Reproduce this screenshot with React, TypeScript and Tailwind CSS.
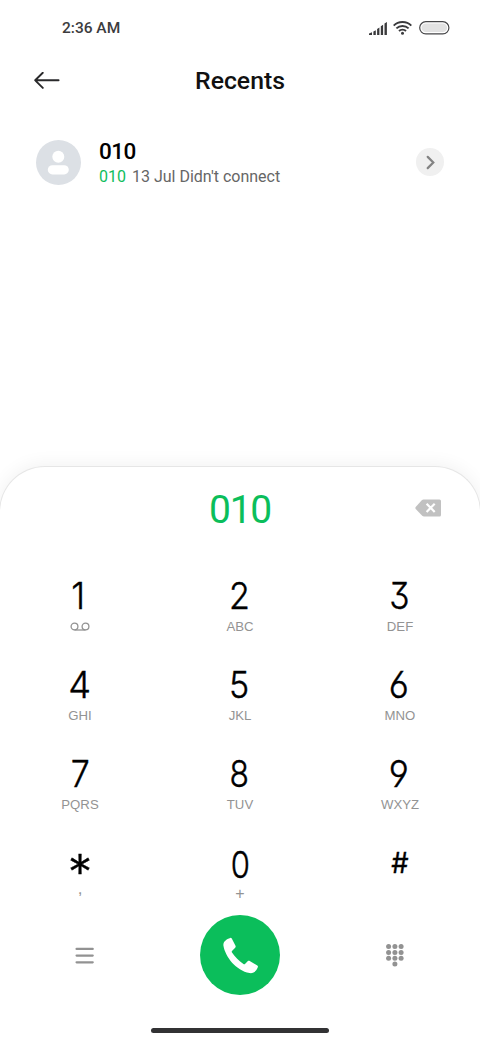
import React from "react";

type Key = {
    digit: string;
    label?: React.ReactNode;
    digitClass?: string;
    labelClass?: string;
};

const Voicemail = () => (
    <svg className="shrink-0" width="20" height="10" viewBox="0 0 20 10" fill="none" stroke="#939393" strokeWidth="1.3">
        <circle cx="4.5" cy="4.5" r="3.4" />
        <circle cx="15.5" cy="4.5" r="3.4" />
        <path d="M4.5 8H15.5" />
    </svg>
);

const digitBase = "scale-x-[0.92] text-[37px] font-light";

const keys: Key[] = [
    { digit: "1", label: <Voicemail />, digitClass: "scale-x-[0.95] text-[37px] font-light -translate-x-[2px]" },
    { digit: "2", label: "ABC", digitClass: "scale-x-[0.92] text-[37px] font-light -translate-x-px" },
    { digit: "3", label: "DEF", digitClass: "scale-x-[0.90] text-[37px] font-light -translate-x-px" },
    { digit: "4", label: "GHI", digitClass: "scale-x-[0.98] text-[37px] font-light" },
    { digit: "5", label: "JKL", digitClass: "scale-x-[0.92] text-[37px] font-light -translate-x-px" },
    { digit: "6", label: "MNO", digitClass: "scale-x-[0.94] text-[37px] font-light -translate-x-px" },
    { digit: "7", label: "PQRS" },
    { digit: "8", label: "TUV", digitClass: "scale-x-[0.86] text-[37px] font-light -translate-x-px" },
    { digit: "9", label: "WXYZ", digitClass: "scale-x-[0.94] text-[37px] font-light -translate-x-px" },
    { digit: "*", label: ",", digitClass: "text-[49px] font-light translate-y-[10px]", labelClass: "-translate-y-[5px] text-[17px]" },
    { digit: "0", label: "+", digitClass: "scale-x-[0.84] text-[37px] font-light translate-y-[2px]", labelClass: "text-[16px]" },
    { digit: "#", digitClass: "scale-x-[0.96] text-[28.5px] font-normal" },
];

function StatusBar() {
    return (
        <div className="flex h-14 items-center justify-between pl-[62px] pr-[30px]">
            <span className="mt-[2px] text-[15.5px] font-medium text-[#3c3c3e]">2:36 AM</span>
            <div className="flex items-center">
                <svg className="translate-x-px" width="18" height="13" viewBox="0 0 18 13" fill="#3a3a3c">
                    <path d="M0 13V11.6L3 10.2V13ZM4.4 9.4L6.8 8.2V13H4.4ZM8.1 7L10.4 5.6V13H8.1ZM11.8 4.2L14.1 2.8V13H11.8ZM15.5 1.5L17.9 0V13H15.5Z" />
                </svg>
                <svg className="ml-[7px]" width="19" height="14" viewBox="0 0 19 14" fill="none" stroke="#3a3a3c" strokeWidth="1.9">
                    <path d="M.7 4.6C5.5-.2 13.5-.2 18.3 4.6" />
                    <path d="M3.4 7.4C6.7 4.1 12.3 4.1 15.6 7.4" />
                    <path d="M6 10C7.9 8.1 11.1 8.1 13 10" />
                    <circle cx="9.5" cy="12.2" r="1.5" fill="#3a3a3c" stroke="none" />
                </svg>
                <svg className="ml-[7px]" width="31" height="14" viewBox="0 0 31 14">
                    <rect x=".7" y=".7" width="29.2" height="12.2" rx="6.1" fill="#fff" stroke="#464648" strokeWidth="1.2" />
                    <rect x="2.5" y="2.5" width="25.6" height="8.6" rx="4.3" fill="#e2e2e2" />
                </svg>
            </div>
        </div>
    );
}

function Header() {
    return (
        <header className="grid h-[50px] grid-cols-[80px_1fr_80px] items-center">
            <svg className="ml-[34px]" width="27" height="18" viewBox="0 0 27 18" fill="none" stroke="#29292b" strokeWidth="1.9" strokeLinecap="round" strokeLinejoin="round">
                <path d="M24.6 8.3H1.2M8.8.8L1.2 8.3L8.8 15.9" />
            </svg>
            <h1 className="text-center text-[24.8px] font-medium text-[#111]">Recents</h1>
        </header>
    );
}

function CallRow() {
    return (
        <div className="mt-[30px] flex h-[52px] items-center pl-9 pr-9">
            <svg width="45" height="45" viewBox="0 0 45 45" className="shrink-0">
                <circle cx="22.5" cy="22.5" r="22.5" fill="#dce0e5" />
                <circle cx="22.3" cy="16.8" r="6" fill="#fff" />
                <rect x="11.8" y="25.2" width="21" height="9.2" rx="4.6" fill="#fff" />
            </svg>
            <div className="ml-[18px] mt-[2px] flex-1">
                <div className="text-[22.5px] leading-[26px] font-medium tracking-[-0.5px] text-black">010</div>
                <div className="text-[16px] leading-[25px] text-[#666]">
                    <span className="mr-[6px] text-[#10bd5d]">010</span>
                    13 Jul Didn't connect
                </div>
            </div>
            <svg width="28" height="28" viewBox="0 0 28 28" fill="none">
                <circle cx="14" cy="14" r="14" fill="#f0f0f0" />
                <path d="M11.7 8.9L17.3 14.5L11.7 20.1" stroke="#838383" strokeWidth="2.2" strokeLinecap="round" />
            </svg>
        </div>
    );
}

function DialKey({ digit, label, digitClass = digitBase, labelClass = "text-[13.2px]" }: Key) {
    return (
        <button className="flex h-[89px] flex-col items-center">
            <span
                className={`h-[42px] font-[Inter] leading-[42px] text-black [-webkit-text-stroke:0.4px_black] [font-feature-settings:'cv03','cv04','cv09'] ${digitClass}`}
            >
                {digit}
            </span>
            <span
                className={`mt-px flex h-[18px] items-center font-['Liberation_Sans',Arial,sans-serif] leading-[18px] text-[#939393] ${labelClass}`}
            >
                {label}
            </span>
        </button>
    );
}

function BottomBar() {
    return (
        <div className="grid grid-cols-[170px_1fr_170px] items-center justify-items-center">
            <svg className="mr-px" width="19" height="17" viewBox="0 0 19 17" stroke="#929292" strokeWidth="2.3" strokeLinecap="round">
                <path d="M1.6 1.9H17.7M1.6 8.6H17.7M1.6 15.3H17.7" />
            </svg>
            <button className="flex size-20 items-center justify-center rounded-full bg-[#0bbe5b]">
                <svg width="37" height="37" viewBox="0 0 37 37" fill="#fff">
                    <path d="M8.3.9C9 .7 9.5 1 9.9 1.7L13.5 8.8C13.9 9.6 13.7 10.1 13.2 10.7L10 13.9C9.6 14.4 9.7 15 10 15.6C13 20.1 17 24 21.4 27C22.1 27.4 22.6 27.4 23 27L25.9 24C26.4 23.6 27 23.5 27.7 23.9L35.3 28.6C36 29.1 36.1 29.6 35.8 30.3C34.4 34.3 31.2 36.6 27.6 36.1C14 33.5 3.3 20 1.4 8.5C1 4.8 4.2 2.1 8.3.9Z" />
                </svg>
            </button>
            <svg width="18" height="23" viewBox="0 0 18 23" fill="#929292">
                {[2.6, 8.9, 15.1].map((cx) =>
                    [2.6, 8.4, 14.2].map((cy) => <circle key={`${cx}-${cy}`} cx={cx} cy={cy} r="2.5" />)
                )}
                <circle cx="8.9" cy="20" r="2.5" />
            </svg>
        </div>
    );
}

function Dialer() {
    return (
        <section className="-mx-px mt-[278px] flex h-[574px] flex-col rounded-t-[46px] border border-b-0 border-[#e6e6e6] bg-white shadow-[0_-2px_18px_rgba(0,0,0,0.055)]">
            <div className="mt-[21px] grid h-11 grid-cols-[80px_1fr_80px] items-center">
                <span className="col-start-2 text-center text-[39px] leading-[44px] tracking-[-1.2px] text-[#0bbe5b]">010</span>
                <svg className="ml-[15px] mb-[5px]" width="27" height="18" viewBox="0 0 27 18" fill="none">
                    <path d="M8.5.4H24.5Q26 .4 26 2V16Q26 17.6 24.5 17.6H9Q8 17.6 7.2 16.8L.7 10.1Q0 9 .7 7.9L7 1.1Q7.7.4 8.5.4Z" fill="#c1c1c1" />
                    <path d="M11.6 4.7L19.7 12.9M19.7 4.7L11.6 12.9" stroke="#fff" strokeWidth="2.2" />
                </svg>
            </div>
            <div className="mt-[43px] grid grid-cols-3">
                {keys.map((key) => (
                    <DialKey key={key.digit} {...key} />
                ))}
            </div>
            <div className="-mt-[16px]">
                <BottomBar />
            </div>
            <div className="mx-auto mt-[33px] h-[5px] w-[178px] rounded-full bg-[#323234]" />
        </section>
    );
}

export default function App() {
    return (
        <main className="h-[1040px] w-[480px] overflow-hidden bg-white font-[Roboto,sans-serif]">
            <StatusBar />
            <Header />
            <CallRow />
            <Dialer />
        </main>
    );
}
